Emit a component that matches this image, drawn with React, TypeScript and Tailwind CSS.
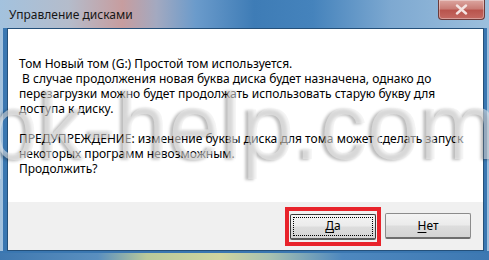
import React from 'react';

const font = "font-['Noto_Sans','Open_Sans',sans-serif]";

const CloseButton: React.FC = () => (
  <div className="mr-[2px] w-[47px] h-[20px] rounded-b-[4px] border border-t-0 border-[#6b3b3b] bg-[linear-gradient(to_bottom,#dca6a0_0%,#c97d76_45%,#b9544d_55%,#c46a63_100%)] shadow-[inset_0_0_0_1px_rgba(255,255,255,0.35)] flex items-center justify-center">
    <svg width="13" height="11" viewBox="0 0 13 11">
      <path d="M2 1.5 L11 9.5 M11 1.5 L2 9.5" stroke="#f4e4e2" strokeWidth="2.4" strokeLinecap="round" />
    </svg>
  </div>
);

const DialogButton: React.FC<{ accel: string; rest: string; focused?: boolean }> = ({ accel, rest, focused }) => (
  <button
    className={`w-[86px] h-[26px] rounded-[2px] border border-b-2 text-[12px] text-black ${font} flex items-center justify-center
      bg-[linear-gradient(to_bottom,#f4f4f4_0%,#ebebeb_48%,#dddddd_52%,#d4d4d4_100%)]
      ${focused ? 'border-[#3a3a3a] border-b-[#5a5a5a]' : 'border-[#8c8c8c] border-b-[#6e6e6e]'}`}
  >
    <span className={focused ? 'w-[78px] h-[17px] outline outline-1 outline-dotted outline-black flex items-center justify-center' : ''}>
      <span className="underline underline-offset-2">{accel}</span>{rest}
    </span>
  </button>
);

const App: React.FC = () => {
  return (
    <div className="relative w-[489px] h-[260px] overflow-hidden flex flex-col pl-[3px] pr-[2px] pb-[9px] bg-[linear-gradient(to_right,#a3c2de_0%,#b4bccb_14%,#c79d9f_25%,#a3a9c0_32%,#6b9bcb_40%,#3e7cb6_52%,#4583bc_64%,#7ea9d1_80%,#9cbfdd_100%)]">
      {/* title bar */}
      <div className="h-[28px] flex items-start justify-between shrink-0">
        <div className={`pl-[6px] pt-[7px] text-[12px] leading-[15px] text-[#161616] ${font}`}>Управление дисками</div>
        <CloseButton />
      </div>

      {/* frame sides */}
      <div className="flex-1 flex border-l-[4px] border-l-[#3a77b1] border-r-[3px] border-r-[#3a77b1]">
        {/* client area */}
        <div className="flex-1 flex flex-col border border-[#24507a] bg-white">
          <div className={`flex-1 pt-[27px] pl-[11px] text-[12px] leading-[15px] text-black whitespace-pre ${font}`}>
            <div>Том Новый том (G:) Простой том используется.</div>
            <div> В случае продолжения новая буква диска будет назначена, однако до</div>
            <div>перезагрузки можно будет продолжать использовать старую букву для</div>
            <div>доступа к диску.</div>
            <div>&nbsp;</div>
            <div>ПРЕДУПРЕЖДЕНИЕ: изменение буквы диска для тома может сделать запуск</div>
            <div>некоторых программ невозможным.</div>
            <div>Продолжить?</div>
          </div>
          <div className="h-[48px] shrink-0 bg-[#f0f0f0] flex items-center justify-end gap-[4px] pr-[12px]">
            <div className="border-[4px] border-[#e8232b] pt-[3px] pb-[2px] px-[1px]">
              <DialogButton accel="Д" rest="а" focused />
            </div>
            <DialogButton accel="Н" rest="ет" />
          </div>
        </div>
      </div>

      {/* bottom frame tint */}
      <div className="absolute left-0 right-0 bottom-0 h-[9px] border-t-2 border-t-[#3a77b1] bg-[linear-gradient(to_right,#3f78b0_0%,#5a8fbf_20%,#b9c99a_30%,#cfd59f_45%,#a9c2b0_55%,#4e88bf_70%,#3d78b2_100%)]" />

      {/* watermark */}
      <div className="pointer-events-none absolute left-[-14px] top-[79px] text-[94px] leading-[96px] font-['Liberation_Sans',sans-serif] text-[rgba(236,236,236,0.55)] [text-shadow:-3px_1px_3px_rgba(0,0,0,0.26)] whitespace-nowrap">
        pk-help.com
      </div>
    </div>
  );
};

export default App;
